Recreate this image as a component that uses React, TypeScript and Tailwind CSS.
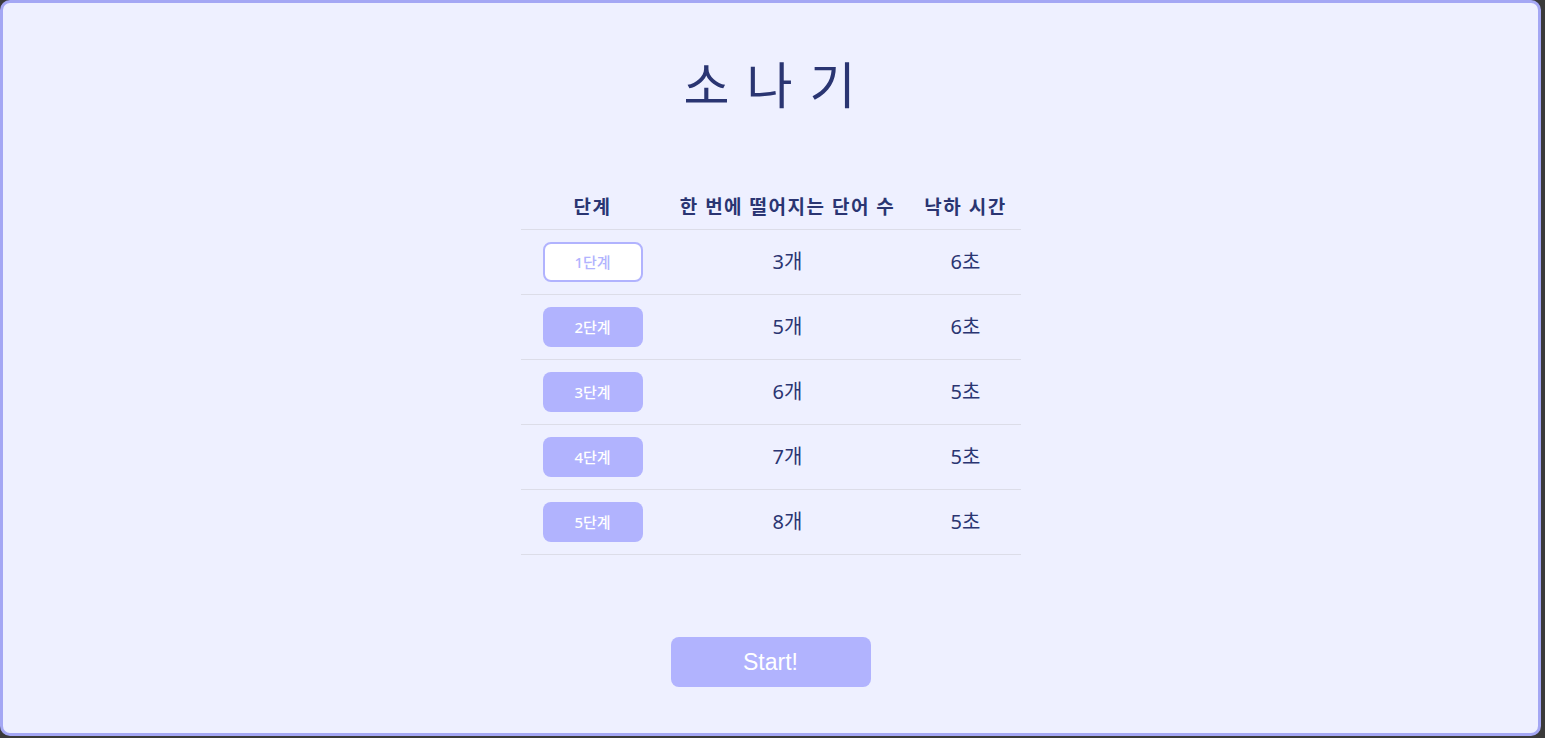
import React from "react";

const rows = [
  { level: "1단계", count: "3개", time: "6초", selected: true },
  { level: "2단계", count: "5개", time: "6초" },
  { level: "3단계", count: "6개", time: "5초" },
  { level: "4단계", count: "7개", time: "5초" },
  { level: "5단계", count: "8개", time: "5초" },
];

export default function App() {
  return (
    <div
      className="w-[1545px] h-[738px] bg-[#3a3a3a] pr-[4px] pb-[2px]"
      style={{ fontFamily: '"Noto Sans", "Noto Sans CJK KR", sans-serif' }}
    >
      <div className="h-full w-full rounded-[10px] border-[3px] border-[#a4a7f4] bg-[#eef0ff] flex flex-col items-center">
        <h1 className="mt-[47px] text-[50px] leading-[70px] font-normal text-[#2a3572] tracking-[2px]">
          소 나 기
        </h1>
        <div className="mt-[65px] w-[500px] flex flex-col">
          <div className="grid grid-cols-[144px_246px_110px] h-[45px] items-center border-b border-[#dcdde8] text-[19px] tracking-[1.5px] font-bold text-[#2a3572]">
            <div className="text-center">단계</div>
            <div className="text-center whitespace-nowrap">한 번에 떨어지는 단어 수</div>
            <div className="text-center whitespace-nowrap">낙하 시간</div>
          </div>
          {rows.map((r) => (
            <div
              key={r.level}
              className="grid grid-cols-[144px_246px_110px] h-[65px] items-center border-b border-[#dcdde8] text-[20px] text-[#2a3572]"
            >
              <div className="flex justify-center">
                {r.selected ? (
                  <button className="w-[100px] h-[40px] rounded-[8px] border-2 border-[#b1b3fe] bg-white text-[15px] font-medium text-[#b1b3fe]">
                    {r.level}
                  </button>
                ) : (
                  <button className="w-[100px] h-[40px] rounded-[8px] bg-[#b1b3fe] text-[15px] font-medium text-white">
                    {r.level}
                  </button>
                )}
              </div>
              <div className="text-center">{r.count}</div>
              <div className="text-center">{r.time}</div>
            </div>
          ))}
        </div>
        <button
          className="mt-[82px] w-[200px] h-[50px] rounded-[8px] bg-[#b1b3fe] text-white text-[23px]"
          style={{ fontFamily: '"Liberation Sans", Arial, sans-serif' }}
        >
          Start!
        </button>
      </div>
    </div>
  );
}
